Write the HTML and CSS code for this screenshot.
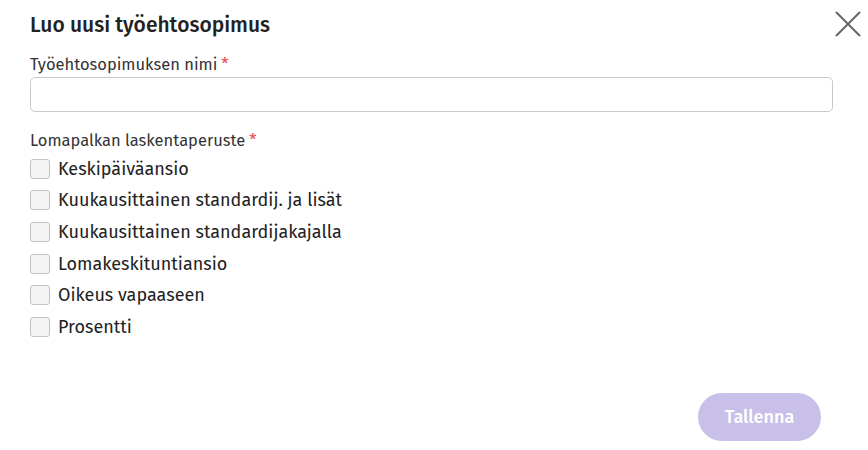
FILE: index.html
```html
<!DOCTYPE html>
<html lang="fi">
<head>
  <meta charset="UTF-8">
  <meta name="viewport" content="width=device-width, initial-scale=1.0">
  <title>Luo uusi työehtosopimus</title>
  <link rel="stylesheet" href="styles.css">
</head>
<body>
  <div class="modal">
    <!-- Header -->
    <div class="modal-header">
      <h1>Luo uusi työehtosopimus</h1>
      <button class="close-btn" aria-label="Sulje">
        <svg width="26" height="26" viewBox="0 0 26 26">
          <path d="M1 1 L25 25 M25 1 L1 25" stroke="#666" stroke-width="2" fill="none"/>
        </svg>
      </button>
    </div>

    <!-- Name -->
    <div class="field field-name">
      <label for="name">Työehtosopimuksen nimi<span class="req">*</span></label>
      <input type="text" id="name">
    </div>

    <!-- Basis -->
    <div class="field field-basis">
      <div class="field-label">Lomapalkan laskentaperuste<span class="req">*</span></div>
      <div class="checkbox-group">
        <label><span class="box"></span>Keskipäiväansio</label>
        <label><span class="box"></span>Kuukausittainen standardij. ja lisät</label>
        <label><span class="box"></span>Kuukausittainen standardijakajalla</label>
        <label><span class="box"></span>Lomakeskituntiansio</label>
        <label><span class="box"></span>Oikeus vapaaseen</label>
        <label><span class="box"></span>Prosentti</label>
      </div>
    </div>

    <div class="modal-footer">
      <button class="save-btn" disabled>Tallenna</button>
    </div>
  </div>
</body>
</html>
```

FILE: styles.css
```css
body {
  margin: 0;
  padding: 0;
  background: #fff;
  font-family: 'Fira Sans', 'Open Sans', sans-serif;
  color: #222;
}
.modal {
  width: 868px;
  height: 450px;
  box-sizing: border-box;
  padding: 0 35px 0 30px;
  display: flex;
  flex-direction: column;
}
.modal-header {
  display: flex;
  justify-content: space-between;
  align-items: flex-start;
  margin-right: -28px;
}
.modal-header h1 {
  font-size: 21px;
  font-weight: 500;
  color: #222;
  margin: 10px 0 0;
  line-height: 30px;
}
.close-btn {
  background: none;
  border: none;
  padding: 0;
  margin-top: 11px;
  width: 26px;
  height: 26px;
  cursor: pointer;
}
.field-name {
  margin-top: 15px;
}
.field-basis {
  margin-top: 19px;
}
.field label,
.field-label {
  display: block;
  font-size: 16.5px;
  color: #333;
  line-height: 20px;
}
.req {
  color: #e5484d;
  margin-left: 4px;
}
.field input {
  display: block;
  width: 100%;
  box-sizing: border-box;
  height: 35px;
  margin-top: 2px;
  border: 1px solid #c8c8c8;
  border-radius: 5px;
  font-size: 16px;
  padding: 0 10px;
}
.checkbox-group {
  margin-top: 2px;
}
.checkbox-group label {
  display: flex;
  align-items: center;
  font-size: 18px;
  color: #222;
  height: 31.6px;
}
.box {
  width: 18px;
  height: 18px;
  border: 1px solid #c4c4c4;
  border-radius: 3px;
  background: #f3f3f3;
  margin-right: 8px;
  flex-shrink: 0;
}
.modal-footer {
  margin-top: auto;
  margin-bottom: 9px;
  display: flex;
  justify-content: flex-end;
  padding-right: 12px;
}
.save-btn {
  width: 123px;
  height: 48px;
  border: none;
  border-radius: 24px;
  background: #c8c0e8;
  color: #fff;
  font-family: inherit;
  font-size: 18px;
  font-weight: 500;
}
```
